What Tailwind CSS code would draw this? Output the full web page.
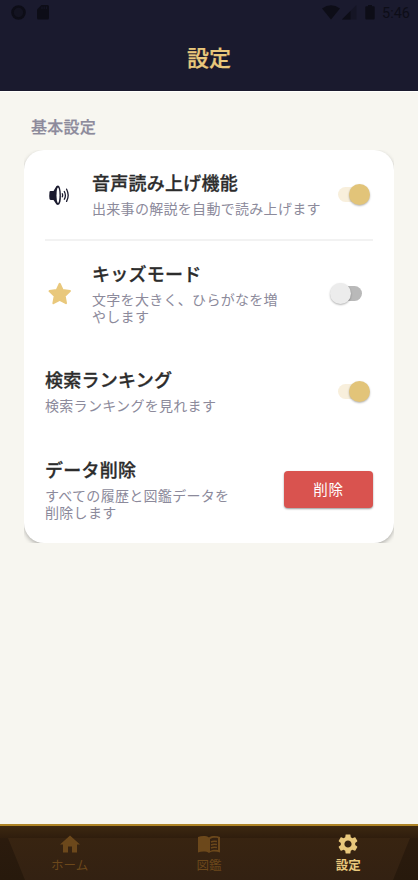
<!DOCTYPE html>
<html lang="ja">
<head>
<meta charset="utf-8">
<meta name="viewport" content="width=device-width, initial-scale=1">
<title>設定</title>
<script src="https://cdn.jsdelivr.net/npm/@tailwindcss/browser@4"></script>
</head>
<body class="w-[418px] h-[880px] overflow-hidden flex flex-col bg-[#f7f6f0] font-['Noto_Sans_CJK_JP',sans-serif]">
<header class="h-[91px] shrink-0 bg-[#1a1a2e] flex flex-col">
  <div class="h-[25px] flex items-center pl-[11px] pr-[6px] text-[#0d0d17]">
    <svg class="w-[15px] h-[15px]" viewBox="0 0 15 15"><circle cx="7.5" cy="7.5" r="6" fill="#131321" stroke="currentColor" stroke-width="2.6"/></svg>
    <svg class="w-[12px] h-[15px] ml-[11px]" viewBox="0 0 12 15"><path fill="currentColor" d="M4.500 0H10.500a1.500 1.500 0 0 1 1.500 1.500V13a1.500 1.500 0 0 1-1.500 1.500H1.500A1.500 1.500 0 0 1 0 13V4.500z"/><path stroke="#1a1a2e" stroke-width=".7" d="M5 1.500v2.500M7.200 1.500v2.500M9.400 1.500v2.500"/></svg>
    <svg class="w-[18px] h-[15px] ml-auto" viewBox="0 0 18 15"><path fill="currentColor" d="M0 3.600Q9-3.200 18 3.600L9 14.500z"/></svg>
    <svg class="w-[15px] h-[15px] ml-[2px]" viewBox="0 0 15 15"><path fill="#151525" d="M14.500 0v14.500H0z"/><path fill="currentColor" d="M8.500 6v8.500H0z"/></svg>
    <svg class="w-[10px] h-[15px] ml-[8px]" viewBox="0 0 10 15"><path fill="currentColor" d="M3 0h4v1.200h1.500A1.200 1.200 0 0 1 9.700 2.500v10.800a1.200 1.200 0 0 1-1.200 1.200h-7A1.200 1.200 0 0 1 .3 13.300V2.500a1.200 1.200 0 0 1 1.200-1.300H3z"/></svg>
    <span class="ml-[7px] w-[30px] text-[14.500px] leading-[25px] pt-[1px] whitespace-nowrap font-[Roboto,sans-serif]">5:46</span>
  </div>
  <h1 class="h-[66px] text-center text-[22px] leading-[63px] font-medium text-[#e9c87c] [-webkit-text-stroke:.25px]">設定</h1>
</header>
<main class="flex-1 border-t border-[#fffffc] px-[24px]">
  <h2 class="mt-[21px] ml-[7px] h-[37px] text-[16px] leading-[26px] tracking-[.25px] font-medium text-[#8c8a9b] [-webkit-text-stroke:.25px]">基本設定</h2>
  <div class="w-[370px] h-[393px] overflow-hidden">
    <section class="h-[393px] rounded-[20px] bg-white shadow-[0_2px_4px_rgba(0,0,0,.28)] px-[21px] flex flex-col">
      <div class="h-[91px] shrink-0 border-b-2 border-[#f2f2f2] flex items-center">
        <svg class="w-[22px] h-[24px] ml-[3px] mr-[22px] shrink-0" viewBox="0 0 22 24"><path fill="#1a1a2e" d="M1.500 8.700Q1.800 7.800 3 8H5.500L8.500 3Q12.500.2 12.900 12T8.500 21.500L5.500 17H3Q1.800 17 1.500 16.100Q1 12.500 1.500 8.700z"/><ellipse cx="10" cy="12.200" rx="1.500" ry="7.800" fill="white"/><path fill="none" stroke="#1a1a2e" stroke-width="1.300" stroke-linecap="round" d="M14.300 10.800q.7 1.500 0 3M16.300 8.500q2.200 3.900 0 7.800M18.600 6.200q3.200 6.200 0 12.200"/></svg>
        <div class="pb-[4px]">
          <h3 class="text-[18px] leading-[26px] tracking-[.25px] font-medium text-[#2c2c2c] [-webkit-text-stroke:.3px]">音声読み上げ機能</h3>
          <p class="mt-[5px] text-[14px] leading-[17px] tracking-[.3px] text-[#8c8a9b] whitespace-nowrap">出来事の解説を自動で読み上げます</p>
        </div>
        <div class="ml-auto mr-[3px] w-[32px] h-[22px] shrink-0 flex items-center"><div class="w-[28px] h-[15px] rounded-full bg-[#f8efdc]"></div><div class="-ml-[17px] w-[21px] h-[21px] shrink-0 rounded-full bg-[#e2c479] shadow-[0_1px_2px_rgba(0,0,0,.3)]"></div></div>
      </div>
      <div class="h-[106px] shrink-0 flex items-center">
        <svg class="w-[24px] h-[24px] ml-[3px] mr-[20px] shrink-0" viewBox="0 0 24 24"><path fill="#e9c87c" stroke="#e9c87c" stroke-width="2" stroke-linejoin="round" d="M11.700 1.800l3 6.300 7.200 1-5.200 4.900 1.300 7.200-6.300-3.400-6.300 3.400 1.300-7.200-5.200-4.900 7.200-1z"/></svg>
        <div class="pb-[4px]">
          <h3 class="text-[18px] leading-[26px] tracking-[.25px] font-medium text-[#2c2c2c] [-webkit-text-stroke:.3px]">キッズモード</h3>
          <p class="mt-[5px] text-[14px] leading-[17px] tracking-[.3px] text-[#8c8a9b] whitespace-nowrap">文字を大きく、ひらがなを増<br>やします</p>
        </div>
        <div class="ml-auto mr-[11px] mb-[1px] w-[32px] h-[22px] shrink-0 flex items-center"><div class="w-[21px] h-[21px] z-10 shrink-0 rounded-full bg-[#ececec] shadow-[0_1px_2px_rgba(0,0,0,.3)]"></div><div class="-ml-[17px] w-[28px] h-[15px] shrink-0 rounded-full bg-[#b9b9b9]"></div></div>
      </div>
      <div class="h-[90px] shrink-0 flex items-center">
        <div class="pb-[4px]">
          <h3 class="text-[18px] leading-[26px] tracking-[.25px] font-medium text-[#2c2c2c] [-webkit-text-stroke:.3px]">検索ランキング</h3>
          <p class="mt-[5px] text-[14px] leading-[17px] tracking-[.3px] text-[#8c8a9b] whitespace-nowrap">検索ランキングを見れます</p>
        </div>
        <div class="ml-auto mr-[3px] mb-[2px] w-[32px] h-[22px] shrink-0 flex items-center"><div class="w-[28px] h-[15px] rounded-full bg-[#f8efdc]"></div><div class="-ml-[17px] w-[21px] h-[21px] shrink-0 rounded-full bg-[#e2c479] shadow-[0_1px_2px_rgba(0,0,0,.3)]"></div></div>
      </div>
      <div class="h-[106px] shrink-0 flex items-center">
        <div class="pb-[4px]">
          <h3 class="text-[18px] leading-[26px] tracking-[.25px] font-medium text-[#2c2c2c] [-webkit-text-stroke:.3px]">データ削除</h3>
          <p class="mt-[5px] text-[14px] leading-[17px] tracking-[.3px] text-[#8c8a9b] whitespace-nowrap">すべての履歴と図鑑データを<br>削除します</p>
        </div>
        <button class="ml-auto mb-[2px] pb-[2px] w-[89px] h-[37px] shrink-0 rounded-[4px] bg-[#d9534f] text-white text-[14.500px] leading-[35px] tracking-[.7px] shadow-[0_1px_2px_rgba(0,0,0,.4)]">削除</button>
      </div>
    </section>
  </div>
</main>
<nav class="h-[56px] shrink-0 border-t-2 border-[#ae8426] relative bg-[#2b1c0f]">
  <svg class="absolute inset-0 w-full h-[54px]" viewBox="0 0 418 54" aria-hidden="true">
    <defs>
      <linearGradient id="wood" x2="0" y2="1"><stop stop-color="#352212"/><stop offset=".25" stop-color="#2b1b0d"/><stop offset="1" stop-color="#27190c"/></linearGradient>
      <linearGradient id="panel" x2="0" y2="1"><stop stop-color="#382411"/><stop offset="1" stop-color="#332112"/></linearGradient>
      <linearGradient id="top" x2="0" y2="1"><stop stop-color="#3c2811"/><stop offset="1" stop-color="#2f1d0d"/></linearGradient>
    </defs>
    <path fill="url(#wood)" d="M0 0H418V54H0z"/>
    <path fill="url(#top)" d="M0 0H418V12H0z"/>
    <path fill="url(#panel)" d="M8 12H410L393 54H25z"/>
  </svg>
  <div class="relative grid grid-cols-3 h-full text-[#6c481b] text-[12.500px] leading-[17px]">
    <div class="flex flex-col items-center pt-[6px]"><svg class="w-[24px] h-[24px]" viewBox="0 0 24 24" fill="currentColor"><path d="M10 20.500v-6h4v6h5v-8h3L12 3.500 2 12.500h3v8z"/></svg><span>ホーム</span></div>
    <div class="flex flex-col items-center pt-[6px]"><svg class="w-[24px] h-[24px]" viewBox="0 0 24 24"><path fill="currentColor" d="M12 5.500C9.500 3.700 4.500 3.700 1 5v15.500c3.500-1.300 8.500-1.300 11 .5 2.500-1.800 7.500-1.800 11-.5V5c-3.500-1.300-8.500-1.300-11 .5z"/><path fill="#352212" d="M13 7c2.200-1.300 5.500-1.500 8-.8v11.900c-2.500-.6-5.800-.4-8 .8z"/><path fill="none" stroke="currentColor" stroke-width="1.500" d="M14 10c1.600-.8 3.800-.9 6-.5M14 13c1.600-.8 3.800-.9 6-.5M14 16c1.600-.8 3.800-.9 6-.5"/></svg><span>図鑑</span></div>
    <div class="flex flex-col items-center pt-[6px] text-[#e9c87c] font-bold"><svg class="w-[24px] h-[24px]" viewBox="0 0 24 24" fill="currentColor"><path d="M19.140 12.940c.04-.3.060-.61.060-.94 0-.32-.02-.64-.07-.94l2.030-1.580c.18-.14.23-.41.120-.61l-1.920-3.320c-.12-.22-.37-.29-.59-.22l-2.390.96c-.5-.38-1.030-.7-1.620-.94l-.36-2.540c-.04-.24-.24-.41-.48-.41h-3.840c-.24 0-.43.170-.47.410l-.36 2.540c-.59.240-1.130.570-1.620.940l-2.390-.96c-.22-.08-.47 0-.59.220L2.740 8.870c-.12.210-.08.470.120.610l2.030 1.580c-.05.3-.09.630-.09.940s.02.640.070.940l-2.030 1.580c-.18.140-.23.410-.12.610l1.920 3.320c.12.220.37.290.59.220l2.390-.96c.5.380 1.030.7 1.620.94l.36 2.540c.05.240.24.410.48.410h3.840c.24 0 .44-.17.470-.41l.36-2.540c.59-.24 1.130-.56 1.620-.94l2.390.96c.22.080.47 0 .59-.22l1.920-3.320c.12-.22.070-.47-.12-.61zM12 15.600c-1.980 0-3.600-1.620-3.600-3.600s1.620-3.600 3.600-3.600 3.600 1.620 3.600 3.600-1.620 3.600-3.600 3.600z"/></svg><span>設定</span></div>
  </div>
</nav>
</body>
</html>
